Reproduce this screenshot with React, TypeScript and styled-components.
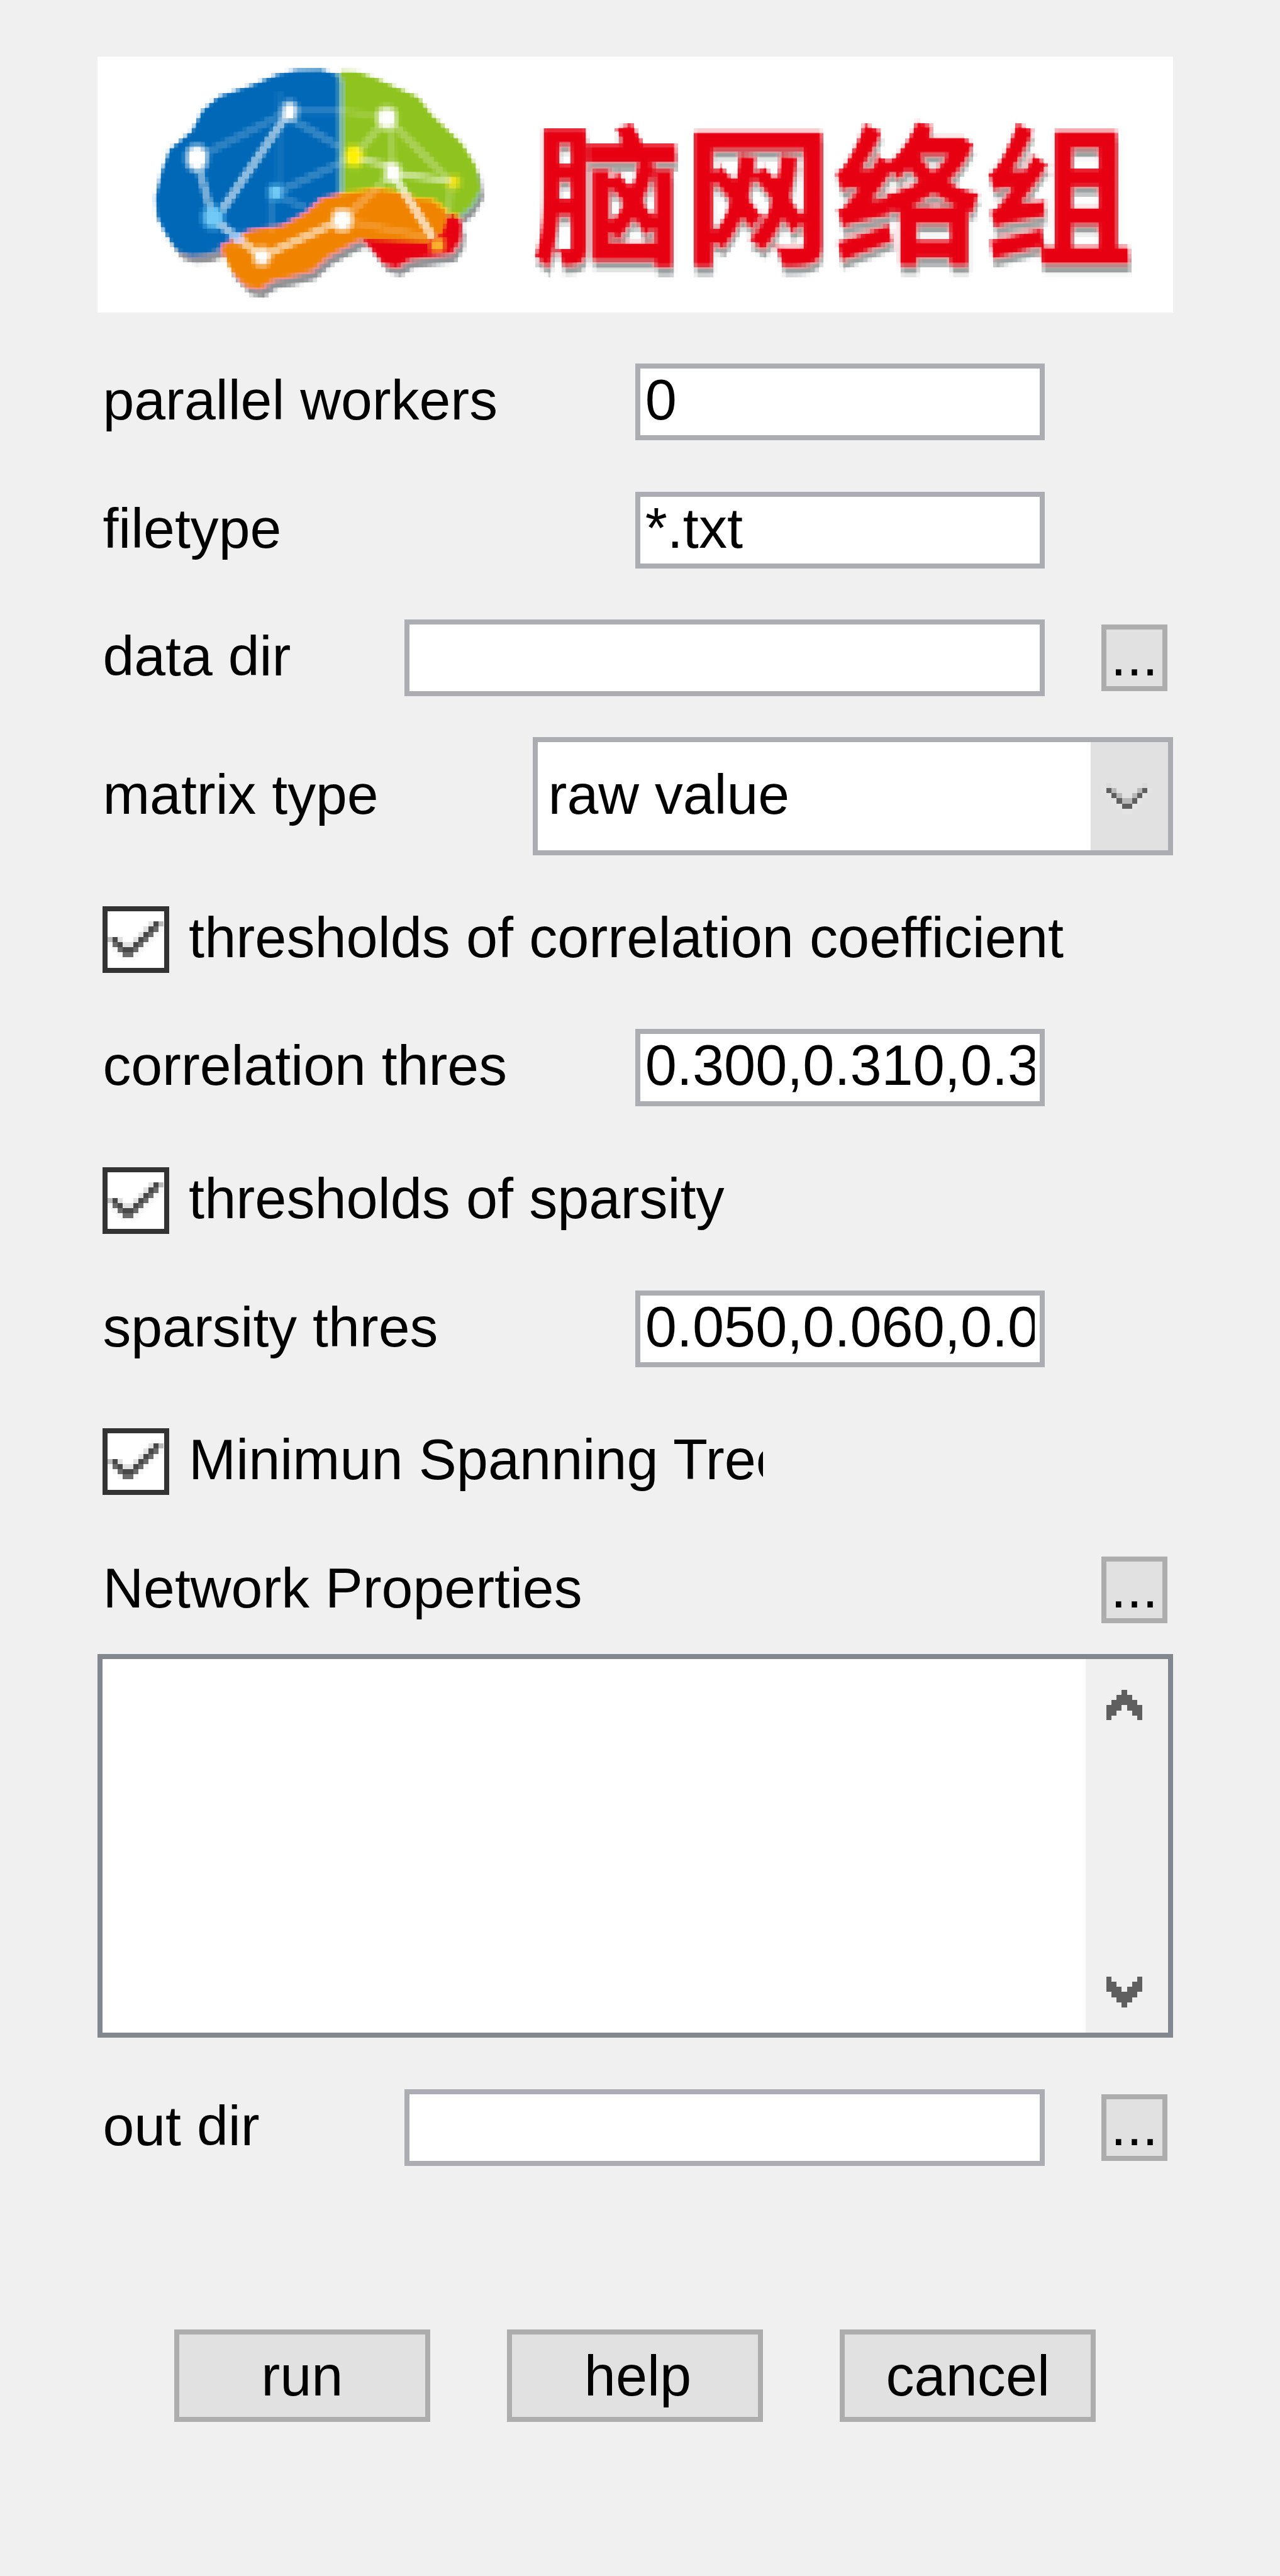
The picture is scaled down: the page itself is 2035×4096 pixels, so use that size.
import React from 'react';
import styled, { createGlobalStyle } from 'styled-components';

// 1rem is one logical pixel of the dialog (250 logical pixels wide).
const GlobalStyle = createGlobalStyle`
  html { font-size: 8.142px; background: #f0f0f0; }
  body { margin: 0; overflow: hidden; }
  * { box-sizing: border-box; }
`;

const Dialog = styled.main`
  width: 250rem;
  height: 4096px;
  padding: 11rem 21rem 0 19rem;
  display: flex;
  flex-direction: column;
  background: #f0f0f0;
  color: #000;
  font-family: 'Liberation Sans', Arial, sans-serif;
  font-size: 11.07rem;
  white-space: pre;
`;

const Banner = styled.div`
  height: 50rem;
  background: #fff;
  svg { display: block; width: 210rem; height: 50rem; }
`;

const Row = styled.div<{ $gap: number; $h: number }>`
  flex: none;
  display: flex;
  align-items: center;
  margin-top: ${p => p.$gap}rem;
  height: ${p => p.$h}rem;
  padding-left: 1rem;
  line-height: ${p => p.$h - 0.64}rem;
`;

const Label = styled.label<{ $w: number }>`
  align-self: flex-start;
  flex: none;
  width: ${p => p.$w}rem;
  padding-left: 0.07rem;
  font-size: 11.01rem;
`;

const Field = styled.div<{ $w: number }>`
  flex: none;
  width: ${p => p.$w}rem;
  height: 15rem;
  padding: 0 1rem;
  border: 1rem solid #abadb3;
  background: #fff;
  line-height: 12.38rem;
`;

const FieldText = styled.span`
  display: block;
  height: 13rem;
  overflow: hidden;
`;

const Select = styled.div`
  display: flex;
  width: 125rem;
  height: 23rem;
  border: 1rem solid #abadb3;
  background: #fff;
  font-size: 11.01rem;
  line-height: 20.4rem;
`;

const SelectValue = styled.span`
  flex: 1;
  padding-left: 2.07rem;
`;

const SelectArrow = styled.span`
  display: flex;
  width: 15rem;
  padding: 8rem 0 0 2rem;
  background: #e1e1e1;
`;

const BrowseButton = styled.button`
  width: 13rem;
  height: 13rem;
  margin-left: 11rem;
  padding: 0;
  border: 1rem solid #adadad;
  border-radius: 0;
  background: #e1e1e1;
  color: #000;
  font: inherit;
  line-height: 10.2rem;
  display: flex;
  justify-content: center;
  align-items: flex-start;
`;

const CheckBox = styled.span`
  display: flex;
  flex: none;
  width: 13rem;
  height: 13rem;
  border: 1rem solid #333;
  background: #fff;
`;

const CheckLabel = styled.label<{ $w: number }>`
  align-self: flex-start;
  margin-left: 3.86rem;
  width: ${p => p.$w}rem;
  overflow: hidden;
`;

const ListBox = styled.div`
  flex: none;
  display: flex;
  justify-content: flex-end;
  height: 75rem;
  margin-top: 6rem;
  border: 1rem solid #828790;
  background: #fff;
`;

const ScrollBar = styled.div`
  display: flex;
  flex-direction: column;
  justify-content: space-between;
  width: 16rem;
  padding: 6rem 0 5rem 4rem;
  background: #f0f0f0;
`;

const Actions = styled.div`
  display: flex;
  gap: 15rem;
  margin-top: 32rem;
  padding-left: 15rem;
`;

const ActionButton = styled.button<{ $shift?: number }>`
  width: 50rem;
  height: 18rem;
  padding: 0 0 0 ${p => p.$shift ?? 0}rem;
  border: 1rem solid #adadad;
  border-radius: 0;
  background: #e1e1e1;
  color: #000;
  font: inherit;
  line-height: 16.24rem;
  display: flex;
  justify-content: center;
  align-items: flex-start;
`;

const PixelSvg = styled.svg<{ $w: number; $h: number }>`
  display: block;
  flex: none;
  width: ${p => p.$w}rem;
  height: ${p => p.$h}rem;
`;

const inks: Record<string, string> = {
  X: '#484848', m: '#6b6b6b', g: '#b8b8b8', l: '#e1e1e1', f: '#f7f7f7',
  D: '#5f5f5f', s: '#dadada', e: '#e4e4e4',
};

const Pixels = ({ rows }: { rows: string[] }) => (
  <PixelSvg
    $w={rows[0].length}
    $h={rows.length}
    viewBox={`0 0 ${rows[0].length} ${rows.length}`}
    shapeRendering="crispEdges"
  >
    {rows.flatMap((row, y) =>
      [...row].map((c, x) =>
        inks[c] ? <rect key={`${x}-${y}`} x={x} y={y} width={1} height={1} fill={inks[c]} /> : null
      )
    )}
  </PixelSvg>
);

const CHECK = [
  '           ',
  '           ',
  '        lXg',
  '       lXmf',
  '      lXmf ',
  'gXl  lXmf  ',
  'fmXllXmf   ',
  ' fmXXmf    ',
  '  fmmf     ',
];
const CHEVRON = [
  ' s      s ',
  'eDg    gDe',
  ' eDg  gDe ',
  '  eDggDe  ',
  '   eDDe   ',
  '    ee    ',
];
const UP = ['   D   ', '  DDD  ', ' DDDDD ', 'DDD DDD', 'DD   DD', 'D     D'];
const DOWN = [...UP].reverse();

const BLUE =
  'M47 3.8L43.9 2.8L38.6 2.9L34.8 3.8L30 5.8L23.6 8L20.6 10.6L18.5 14.6L14.2 18.2L12.6 22.6L11.5 27.4L11.8 31.4L13.4 34.6L15.5 37.6L18.2 38.5L21.4 38.2L24.1 37.2L27.9 35.2L32.1 33.6L37.5 32.6L40.7 30.6L44 28.2L47.1 26.6Z';
const GREEN =
  'M47.6 3L50.9 3.1L54.6 4.4L62.7 8L65.3 11.4L71.2 17L73.9 21.4L74.6 25.8L72.8 29L70.2 31.2L68 30.6L66 30L55 29L47.6 27.6Z';
const ORANGE =
  'M24.4 37.2L27.9 35.2L30 34.2L36.4 33.2L40.7 30.8L43.9 28L47.7 27L54.6 26L59.5 26.8L62.1 28L65.3 28.2L68 30.2L67 33.8L64.3 35.8L52 35.2L49.8 36.2L45 38.8L41.8 41.6L37.5 42.8L34.3 43.4L31.6 45.2L28.9 44.6L25.7 41.4Z';
const RED =
  'M52 35.6L64.3 35.2L66.4 33.8L68 31.6L69.6 31L71 32.6L70.7 35.8L69.1 38.2L61 39.4L58.4 41L55.7 40.2Z';

// x1, y1, x2, y2, opacity
const LINKS = [
  [37.5, 10.6, 24.3, 30, 0.65], [19.3, 19.8, 22.5, 31.6, 0.55], [22.5, 31.6, 27.3, 35.4, 0.7],
  [27.3, 35.4, 32.1, 39, 0.65], [32.1, 39, 47.9, 31.8, 0.65], [51, 20, 58, 21.5, 0.5],
  [57.6, 22.8, 69.5, 24.3, 0.55], [57.6, 22.8, 65.4, 35.2, 0.8],
  [37.5, 10.6, 48, 10.6, 0.18], [48, 10.6, 56.5, 12, 0.15], [37.5, 10.6, 19.3, 19.8, 0.2],
  [37.5, 12, 47.3, 17.6, 0.22], [34.8, 26.6, 50, 19.6, 0.22], [34, 26, 34, 34, 0.14],
  [35, 27, 40.5, 29.5, 0.18], [56.5, 12, 50.1, 19.6, 0.28], [57.3, 12, 57.6, 22.8, 0.22],
  [56.5, 12, 68.5, 24, 0.28], [69, 24.5, 68.5, 31, 0.2], [47.9, 31.8, 57.6, 22.8, 0.25],
  [35.5, 7, 35.5, 26, 0.08], [48, 32, 66, 35.5, 0.18],
];

// cx, cy, rx, ry, fill, halo
const NODES: [number, number, number, number, string, number][] = [
  [37.5, 10.7, 0.8, 1.3, '#fff', 0.35], [19.4, 19.8, 1.4, 1.8, '#fff', 0.4],
  [56.5, 12, 1.2, 1.5, '#fff', 0.4], [57.6, 22.7, 0.9, 1.3, '#fff', 0.4],
  [47.8, 31.9, 1.2, 1.4, '#fff', 0.5], [32.1, 39, 0.9, 1.1, '#fff', 0.4],
  [50.1, 19.5, 1.2, 1.5, '#fff100', 0.3], [69.5, 24.5, 0.7, 0.7, '#f5e60a', 0.25],
  [22.6, 31.4, 1.4, 1.6, '#70caf5', 0.35], [34.8, 26.5, 0.8, 1, '#70caf5', 0.25],
  [27.5, 35.5, 0.7, 0.7, '#a0d0ff', 0.1], [66.4, 36.8, 0.8, 1, '#f9b52e', 0.35],
];

const Logo = () => (
  <svg viewBox="0 0 210 50">
    <defs>
      {/* One sample per logical pixel, grown to fill its cell. */}
      <filter id="mosaic" filterUnits="userSpaceOnUse" primitiveUnits="userSpaceOnUse"
        x="0" y="0" width="210" height="50" colorInterpolationFilters="sRGB">
        <feGaussianBlur in="SourceGraphic" stdDeviation="0.28" result="soft" />
        <feFlood x="0.38" y="0.38" width="0.25" height="0.25" floodColor="#000" result="dot" />
        <feComposite x="0" y="0" width="1" height="1" operator="over" in="dot" in2="dot" />
        <feTile result="dots" />
        <feComposite in="soft" in2="dots" operator="in" />
        <feMorphology operator="dilate" radius="0.45" />
      </filter>
      <filter id="cast" filterUnits="userSpaceOnUse" primitiveUnits="userSpaceOnUse"
        x="80" y="0" width="130" height="50" colorInterpolationFilters="sRGB">
        <feDropShadow dx="0.3" dy="1.8" stdDeviation="0.1" floodColor="#9aa0a0" />
      </filter>
    </defs>
    <g filter="url(#mosaic)">
      <rect width="210" height="50" fill="#fff" />
      <g transform="translate(0.9 1.9)" fill="#8f9295" stroke="#8f9295" strokeWidth="0.6">
        <path d={BLUE} /><path d={GREEN} /><path d={ORANGE} /><path d={RED} />
      </g>
      <path d={BLUE} fill="#0068b7" stroke="#0068b7" strokeWidth="1" />
      <path d={GREEN} fill="#8fc31f" stroke="#8fc31f" strokeWidth="0.8" />
      <path d={RED} fill="#e60012" stroke="#e60012" strokeWidth="0.8" />
      <path d={ORANGE} fill="#f08300" stroke="#f08300" strokeWidth="0.6" />
      <path d="M47.5 4.5V26.5" stroke="#5fa8b4" strokeWidth="0.7" />
      {LINKS.map(([x1, y1, x2, y2, o], i) => (
        <line key={i} x1={x1} y1={y1} x2={x2} y2={y2} stroke="#fff" strokeOpacity={o} strokeWidth={0.75} />
      ))}
      {NODES.map(([x, y, rx, ry, fill, halo], i) => (
        <g key={i} fill={fill}>
          <ellipse cx={x} cy={y} rx={rx + 0.9} ry={ry + 0.9} fillOpacity={halo} />
          <ellipse cx={x} cy={y} rx={rx} ry={ry} />
        </g>
      ))}
      <g
        filter="url(#cast)"
        fontFamily="'Noto Sans CJK SC', sans-serif"
        fontWeight="700"
        fontSize="29.4"
        fill="#e60012"
        stroke="#e60012"
        strokeWidth="0.6"
        strokeLinejoin="round"
      >
        {['脑', '网', '络', '组'].map((c, i) => (
          <text key={c} x={84.9 + i * 29.35} y={38.2}>{c}</text>
        ))}
      </g>
    </g>
  </svg>
);

const Check = ({ text, gap, w = 160 }: { text: string; gap: number; w?: number }) => (
  <Row $gap={gap} $h={13}>
    <CheckBox><Pixels rows={CHECK} /></CheckBox>
    <CheckLabel $w={w}>{text}</CheckLabel>
  </Row>
);

const Input = ({ label, value, gap }: { label: string; value: string; gap: number }) => (
  <Row $gap={gap} $h={15}>
    <Label $w={104}>{label}</Label>
    <Field $w={80}><FieldText>{value}</FieldText></Field>
  </Row>
);

const Directory = ({ label, gap }: { label: string; gap: number }) => (
  <Row $gap={gap} $h={15}>
    <Label $w={59}>{label}</Label>
    <Field $w={125} />
    <BrowseButton>...</BrowseButton>
  </Row>
);

export default function App() {
  return (
    <>
      <GlobalStyle />
      <Dialog>
        <Banner><Logo /></Banner>
        <Input gap={10} label="parallel workers" value="0" />
        <Input gap={10} label="filetype" value="*.txt" />
        <Directory gap={10} label="data dir" />
        <Row $gap={8} $h={23}>
          <Label $w={84}>matrix type</Label>
          <Select>
            <SelectValue>raw value</SelectValue>
            <SelectArrow><Pixels rows={CHEVRON} /></SelectArrow>
          </Select>
        </Row>
        <Check gap={10} text="thresholds of correlation coefficient" w={176} />
        <Input gap={11} label="correlation thres" value="0.300,0.310,0.3" />
        <Check gap={12} text="thresholds of sparsity" />
        <Input gap={11} label="sparsity thres" value="0.050,0.060,0.0" />
        <Check gap={12} text="Minimun Spanning Tree" w={112.16} />
        <Row $gap={12} $h={13}>
          <Label $w={184}>Network Properties</Label>
          <BrowseButton>...</BrowseButton>
        </Row>
        <ListBox>
          <ScrollBar><Pixels rows={UP} /><Pixels rows={DOWN} /></ScrollBar>
        </ListBox>
        <Directory gap={10} label="out dir" />
        <Actions>
          <ActionButton>run</ActionButton>
          <ActionButton $shift={1.1}>help</ActionButton>
          <ActionButton>cancel</ActionButton>
        </Actions>
      </Dialog>
    </>
  );
}
